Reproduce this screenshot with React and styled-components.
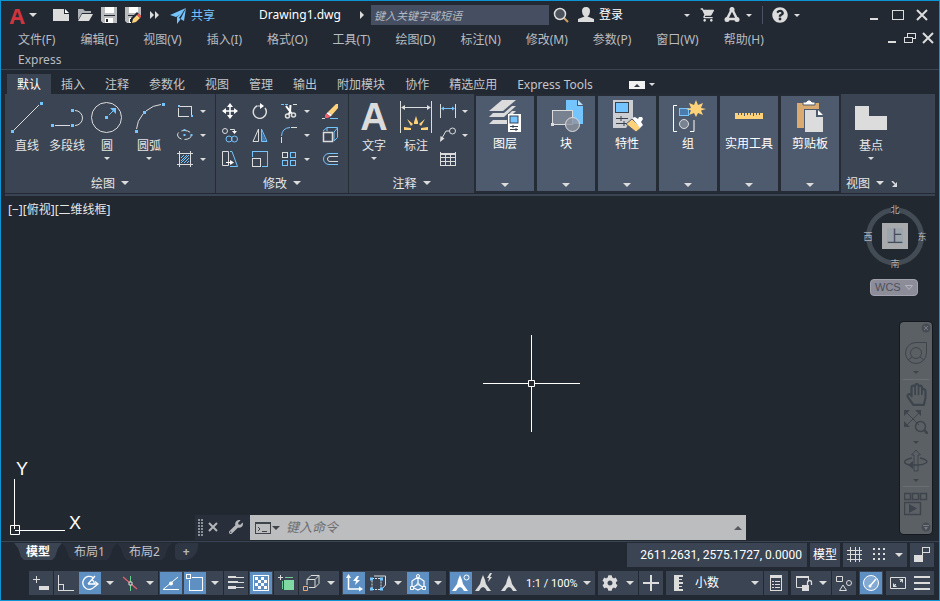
import React from 'react';
import styled, { createGlobalStyle } from 'styled-components';
import { FaCog, FaWrench, FaRegHandPaper, FaQuestionCircle } from 'react-icons/fa';
import { MdShoppingCart } from 'react-icons/md';

const GlobalStyle = createGlobalStyle`
  * {
    box-sizing: border-box;
  }

  body {
    margin: 0;
    background: #222933;
    color: #e6e6e6;
    font: 12px/18px "Noto Sans", "Noto Sans CJK SC", sans-serif;
  }

  button, input, select {
    margin: 0;
    padding: 0;
    border: none;
    background: none;
    color: inherit;
    font: inherit;
  }

  svg {
    display: block;
    flex: none;
  }
`;

const W = '#dcdcdc';
const B = '#74c4ff';
const Y = '#ffd27a';

/* ---------- shared parts ---------- */

const Window = styled.div`
  display: flex;
  flex-direction: column;
  min-height: 100vh;
  border: 1px solid #0d94d4;
  background: #222933;
`;

const Caret = styled.span`
  flex: none;
  width: 0;
  height: 0;
  border: ${p => (p.$big ? 4 : 3)}px solid transparent;
  border-top-color: ${p => p.$color || W};
  border-bottom: none;
`;

const Btn = styled.button`
  display: flex;
  flex: none;
  align-items: center;
  justify-content: center;
  width: ${p => p.$w || 24}px;
  height: ${p => p.$h || 24}px;
`;

const Svg = ({ w = 16, h, crisp, children }) => (
  <svg
    width={w}
    height={h || w}
    viewBox={`0 0 ${w} ${h || w}`}
    fill="none"
    stroke={W}
    shapeRendering={crisp ? 'crispEdges' : 'auto'}
    aria-hidden="true"
  >
    {children}
  </svg>
);

const Dot = ({ x, y, s = 3 }) => (
  <rect x={x - s / 2} y={y - s / 2} width={s} height={s} fill={B} stroke="none" />
);

/* ---------- title bar ---------- */

const TitleBar = styled.header`
  display: flex;
  align-items: center;
  height: 28px;
  padding: 0 5px 0 4px;
  color: #fff;
`;

const Logo = styled.span`
  margin-right: 4px;
  color: #d0343c;
  font: bold 22px/22px "Open Sans", sans-serif;
`;

const Share = styled.button`
  display: flex;
  align-items: center;
  gap: 4px;
  margin-left: 4px;
  padding-top: 1px;
  color: ${B};
`;

const FileName = styled.span`
  flex: 1;
  padding-left: 32px;
  text-align: center;
`;

const SearchInput = styled.input`
  width: 178px;
  height: 20px;
  padding: 0 3px;
  background: #454f61;
  color: #fff;
  font-size: 11px;
  font-style: italic;

  &::placeholder {
    color: #b5bac2;
    opacity: 1;
  }
`;

const Login = styled.button`
  display: flex;
  align-items: center;
  gap: 5px;
  width: 112px;
  margin-left: 5px;

  ${Caret} {
    margin-left: auto;
  }
`;

const Divider = styled.span`
  width: 1px;
  height: 18px;
  margin: 0 8px 0 8px;
  background: #4a5263;
`;

const WindowControls = styled.div`
  display: flex;
  align-items: center;
  margin: 0 ${p => p.$mr || 0}px 0 ${p => p.$ml || 0}px;
`;

const MinIcon = () => (
  <Svg w={14} crisp><path d="M3 11h8" strokeWidth="2" /></Svg>
);
const MaxIcon = () => (
  <Svg w={14} crisp><path d="M1.500 2v9.500M12.500 2v9.500M1 2h12M1 11.500h12" /><path d="M1 2.500h12" /></Svg>
);
const CloseIcon = () => (
  <Svg w={14}><path d="M2 2l10 10M12 2L2 12" strokeWidth="2" /></Svg>
);
const RestoreIcon = () => (
  <Svg w={14} crisp>
    <path d="M1.500 6.500h8v5h-8zM4.500 6V2.500h8v5H10" />
    <path d="M1 6h9M4 2h9" strokeWidth="1" />
  </Svg>
);

const FloppyShape = () => (
  <>
    <path d="M0 0h16v16H2L0 14z" fill="#b9bbbe" stroke="none" />
    <path d="M4 0h9v6H4z" fill="#fff" stroke="none" />
    <path d="M3 8h11v1H3z" fill="#222933" stroke="none" />
    <path d="M4 11h8v5H4z" fill="#fff" stroke="none" />
    <path d="M5 12h2v3H5z" fill="#222933" stroke="none" />
  </>
);

const quickTools = [
  {
    name: '新建',
    icon: (
      <Svg w={16} h={12}>
        <path d="M0 0h11v5h5v7H0z" fill={W} stroke="none" />
        <path d="M12 0l4 4h-4z" fill="#fff" stroke="none" />
      </Svg>
    ),
  },
  {
    name: '打开',
    icon: (
      <Svg w={16} h={14}>
        <path d="M1 12V1h5l2 2h6v2H5z" fill="#aeb1b5" stroke="none" />
        <path d="M5 6h11l-4 7H1z" fill={W} stroke="none" />
      </Svg>
    ),
  },
  { name: '保存', icon: <Svg><FloppyShape /></Svg> },
  {
    name: '另存为',
    icon: (
      <Svg>
        <FloppyShape />
        <path d="M6 16v-5l6-6 5 5v6z" fill="#222933" stroke="none" />
        <path d="M7 16l1-4 4-4 3 3-4 4z" fill={Y} stroke="none" />
        <path d="M12 8l1.500-1.500 3 3L15 11z" fill="#f0574c" stroke="none" />
      </Svg>
    ),
  },
];

function TopBar() {
  return (
    <TitleBar>
      <Btn $w={36} aria-label="应用程序菜单">
        <Logo>A</Logo>
        <Caret $big />
      </Btn>
      <WindowControls $ml={8}>
        {quickTools.map(t => <Btn key={t.name} aria-label={t.name}>{t.icon}</Btn>)}
        <Btn $w={20} aria-label="更多">
          <Svg w={10} h={8}><path d="M0 0l4 4-4 4zM5 0l4 4-4 4z" fill={W} stroke="none" /></Svg>
        </Btn>
      </WindowControls>
      <Share>
        <Svg w={18} h={16}>
          <path d="M1 7L17 0l-5 6-5 3z" fill={B} stroke="none" />
          <path d="M17 0l-2 13-5-3 5-7-7 6v7l3-4" fill={B} stroke="none" />
        </Svg>
        共享
      </Share>
      <FileName>Drawing1.dwg</FileName>
      <Btn $w={18} aria-label="展开搜索">
        <Svg w={4} h={8}><path d="M0 0l4 4-4 4z" fill={W} stroke="none" /></Svg>
      </Btn>
      <SearchInput aria-label="搜索" placeholder="键入关键字或短语" />
      <Btn aria-label="查找">
        <Svg>
          <path d="M11 11l4 4" stroke="#d0a15e" strokeWidth="2" />
          <circle cx="7" cy="7" r="5.500" strokeWidth="1.500" fill="#4b525b" />
        </Svg>
      </Btn>
      <Login>
        <Svg>
          <path d="M8 0c3 0 4 2 4 4 0 3-1.500 5-2.500 5.500L16 12v3H0v-3l6.500-2.500C5.500 9 4 7 4 4c0-2 1-4 4-4z" fill={W} stroke="none" />
        </Svg>
        登录
        <Caret />
      </Login>
      <WindowControls $ml={6}>
        <Btn aria-label="购物车"><MdShoppingCart size={16} color={W} /></Btn>
        <Btn aria-label="Autodesk 应用">
          <Svg>
            <path d="M8 2L3 12h10z" strokeWidth="2.500" stroke={W} />
            <circle cx="8" cy="2.500" r="2.500" fill={W} stroke="none" />
            <circle cx="3" cy="12.500" r="2.500" fill={W} stroke="none" />
            <circle cx="13" cy="12.500" r="2.500" fill={W} stroke="none" />
          </Svg>
        </Btn>
        <Btn $w={10} aria-label="应用选项"><Caret /></Btn>
        <Divider />
        <Btn $w={18} aria-label="帮助"><FaQuestionCircle size={16} color={W} /></Btn>
        <Btn $w={16} aria-label="帮助选项"><Caret /></Btn>
      </WindowControls>
      <WindowControls $ml={57}>
        <Btn aria-label="最小化"><MinIcon /></Btn>
        <Btn aria-label="最大化"><MaxIcon /></Btn>
        <Btn aria-label="关闭"><CloseIcon /></Btn>
      </WindowControls>
    </TitleBar>
  );
}

/* ---------- menu bar ---------- */

const MenuRow = styled.div`
  display: flex;
  align-items: flex-start;
  justify-content: space-between;
  padding-left: 5px;
  border-bottom: 1px solid #3b4453;
`;

const MenuList = styled.nav`
  display: flex;
  flex-wrap: wrap;
  max-width: 820px;
`;

const MenuItem = styled.button`
  height: 20px;
  padding: 1px 13px 0 12px;
  color: #b9bcc1;
  line-height: 20px;
`;

const menus = [
  '文件(F)', '编辑(E)', '视图(V)', '插入(I)', '格式(O)', '工具(T)', '绘图(D)',
  '标注(N)', '修改(M)', '参数(P)', '窗口(W)', '帮助(H)', 'Express',
];

function MenuBar() {
  return (
    <MenuRow>
      <MenuList>
        {menus.map(m => <MenuItem key={m}>{m}</MenuItem>)}
      </MenuList>
      <WindowControls $mr={2}>
        <Btn $w={18} $h={18} aria-label="最小化图形"><MinIcon /></Btn>
        <Btn $w={18} $h={18} aria-label="还原图形"><RestoreIcon /></Btn>
        <Btn $w={18} $h={18} aria-label="关闭图形"><CloseIcon /></Btn>
      </WindowControls>
    </MenuRow>
  );
}

/* ---------- ribbon ---------- */

const TabRow = styled.div`
  display: flex;
  align-items: flex-end;
  height: 24px;
  padding-left: 6px;
`;

const Tab = styled.button`
  height: 20px;
  padding: 1px 10px 0;
  background: ${p => (p.$active ? '#3b4453' : 'none')};
  color: ${p => (p.$active ? '#fff' : '#c3c6ca')};
  line-height: 20px;
`;

const CollapseBtn = styled.button`
  display: flex;
  align-items: center;
  gap: 4px;
  height: 19px;
  margin-left: 26px;
`;

const RibbonBody = styled.div`
  display: flex;
  height: 99px;
  margin: 0 4px;
  background: #3b4453;
`;

const RibbonEdge = styled.div`
  height: 2px;
  margin: 1px 4px 0;
  background: #3b4453;
`;

const Panel = styled.section`
  display: flex;
  flex-direction: column;
  flex: ${p => (p.$grow ? '1' : 'none')};
  border-right: ${p => (p.$grow ? 'none' : '1px solid #262c36')};
`;

const PanelTools = styled.div`
  display: flex;
  flex: 1;
  padding: 5px ${p => p.$pr || 0}px 0 ${p => p.$pl || 0}px;
`;

const PanelTitle = styled.button`
  display: flex;
  align-items: center;
  justify-content: ${p => (p.$left ? 'flex-start' : 'center')};
  gap: 6px;
  height: 20px;
  padding: 2px 5px 0;

  ${Caret} {
    margin-bottom: 2px;
  }
`;

const BigTool = styled.button`
  display: flex;
  flex-direction: column;
  align-items: center;
  width: ${p => p.$w || 40}px;
  height: 64px;
  padding-top: 2px;
  white-space: nowrap;

  svg {
    margin-bottom: 4px;
  }

  ${Caret} {
    margin-top: 2px;
  }
`;

const LetterIcon = styled.span`
  height: 36px;
  color: ${W};
  font: bold 38px/32px "Liberation Sans", sans-serif;
`;

const SmallGrid = styled.div`
  display: grid;
  grid-template-columns: ${p => p.$cols};
  grid-auto-rows: 24px;
`;

const Cell = styled.button`
  display: flex;
  align-items: center;
  justify-content: center;
`;

const Tile = styled.button`
  display: flex;
  flex: none;
  flex-direction: column;
  align-items: center;
  width: 61px;
  padding: 4px 0;
  border: solid #262c36;
  border-width: 2px 2px 2px 1px;
  background: #4e5b6e;
  color: #fff;
  white-space: nowrap;

  svg {
    margin-bottom: 3px;
  }

  ${Caret} {
    margin-top: auto;
  }
`;

const tabs = [
  '默认', '插入', '注释', '参数化', '视图', '管理', '输出', '附加模块', '协作', '精选应用', 'Express Tools',
];

const drawTools = [
  {
    name: '直线',
    icon: <Svg w={32}><path d="M3 29L28 4" /><Dot x={1.5} y={30.5} /><Dot x={30.5} y={2.5} /></Svg>,
  },
  {
    name: '多段线',
    icon: (
      <Svg w={32}>
        <path d="M4 24.500h15M24 9.500a7.500 7.500 0 0 1 0 15" />
        <Dot x={1.5} y={24.5} /><Dot x={21.5} y={24.5} /><Dot x={21.5} y={9.5} />
      </Svg>
    ),
  },
  {
    name: '圆',
    menu: true,
    icon: (
      <Svg w={32}>
        <circle cx="15.500" cy="16.500" r="15" />
        <Dot x={15.5} y={16.5} />
        <path d="M18 14l4-4" stroke={B} />
        <path d="M25 7v6l-6-6z" fill={B} stroke="none" />
      </Svg>
    ),
  },
  {
    name: '圆弧',
    menu: true,
    w: 44,
    icon: (
      <Svg w={32}>
        <path d="M3.500 28Q4 20 10 13M13 10Q20 4 28 3.500" />
        <Dot x={3.5} y={30.5} /><Dot x={11.5} y={11.5} /><Dot x={30.5} y={3.5} />
      </Svg>
    ),
  },
];

const drawSmall = [
  <Svg crisp><path d="M3 3.500h11.500V12M12 13.500H1.500V5" /><Dot x={1.5} y={3} s={2} /><Dot x={15} y={13} s={2} /></Svg>,
  <Svg><ellipse cx="7.500" cy="8" rx="7" ry="4.500" strokeDasharray="9 3" /><Dot x={7.5} y={8} s={2} /><Dot x={7.5} y={3} s={2} /><Dot x={14.5} y={8} s={2} /></Svg>,
  <Svg>
    <path d="M2.500 0v16M13.500 0v16M0 2.500h16M0 13.500h16" />
    <path d="M4 7l3-3M4 10l6-6M4 12l8-8M7 12l5-5M10 12l2-2" stroke={B} />
  </Svg>,
];

const modifyRows = [
  [
    <Svg><path d="M8 2v12M2 8h12" strokeWidth="1.500" stroke="#fff" /><path d="M8 0l3 4H5zM8 16l3-4H5zM0 8l4-3v6zM16 8l-4-3v6z" fill="#fff" stroke="none" /></Svg>,
    <Svg><path d="M5.500 2.800A6.500 6.500 0 1 0 13 5" strokeWidth="1.500" /><path d="M9 3H6" /><path d="M8 0l4 3-4 3z" fill="#fff" stroke="none" /></Svg>,
    <Svg>
      <path d="M0 1.500h7" stroke={B} strokeDasharray="3 1" /><path d="M12 1.500h4" />
      <path d="M5 3l6 8M9.500 2L9 9l-2 3" strokeWidth="2" stroke="#fff" />
      <circle cx="6.500" cy="13" r="2" strokeWidth="1.500" /><circle cx="12.500" cy="12" r="2" strokeWidth="1.500" />
    </Svg>,
    <Svg>
      <path d="M0 15.500h3" /><path d="M8 15.500h8" stroke={B} />
      <path d="M14 1h2v4l-6 7-4-3z" fill={Y} stroke="none" />
      <path d="M6 9l4 3-1.500 1.500-4-3z" fill="#fff" stroke="none" />
      <path d="M4.500 10.500l4 3L6 15H3v-3z" fill="#f0606c" stroke="none" />
    </Svg>,
  ],
  [
    <Svg>
      <circle cx="3" cy="4" r="2.500" /><path d="M8 2.500h4.500V5" /><path d="M10 4h5l-2.500 3z" fill="#fff" stroke="none" />
      <circle cx="7" cy="12" r="3" stroke={B} /><circle cx="12.500" cy="12" r="3" stroke={B} />
    </Svg>,
    <Svg><path d="M6.500 2v12.500H1z" /><path d="M9.500 2v12.500H15z" stroke={B} /><path d="M10 5v9h4z" fill="#3f7bb0" stroke="none" /></Svg>,
    <Svg><path d="M.500 9Q1 1 9 .500" stroke={B} /><path d="M10 .500h6M.500 10v6" /></Svg>,
    <Svg><rect x="1.500" y="5.500" width="9" height="9" strokeWidth="1.500" /><path d="M1 4l4-3.500h10.500v10L12 14M5 1v3M12 5l3.500-4M12 5v9" stroke={B} /></Svg>,
  ],
  [
    <Svg><path d="M.500.500h6v14h-6z" /><path d="M8 .500h2l5.500 15H8" stroke={B} /><path d="M4 11.500h5" stroke="#fff" /><path d="M8 9l4 2.500L8 14z" fill="#fff" stroke="none" /></Svg>,
    <Svg crisp><path d="M.500 6V.500h15v15H10" stroke={B} /><rect x=".500" y="7.500" width="8" height="8" /></Svg>,
    <Svg crisp><rect x="1.500" y="1.500" width="5" height="5" /><g stroke={B}><rect x="9.500" y="1.500" width="5" height="5" /><rect x="1.500" y="9.500" width="5" height="5" /><rect x="9.500" y="9.500" width="5" height="5" /></g></Svg>,
    <Svg><path d="M16 2.500H7a5.500 5.500 0 0 0 0 11h9" stroke={B} /><path d="M16 5.500H8a2.500 2.500 0 0 0 0 5h8" /></Svg>,
  ],
];

const annoSmall = [
  <Svg><path d="M.500 1v14M15.500 1v14" /><path d="M2 5.500h12" stroke={B} /><path d="M1 5.500L4 3.500v4zM15 5.500l-3-2v4z" fill={B} stroke="none" /></Svg>,
  <Svg><circle cx="12.500" cy="4" r="3" /><path d="M9.500 4H6l-4 7" /><path d="M0 15l.500-6 4 2.500z" fill={W} stroke="none" /></Svg>,
  <Svg crisp><path d="M.500 1v13.500h15V1M0 2.500h16M0 3.500h16M0 6.500h16M0 10.500h16M5.500 3v11M10.500 3v11" /></Svg>,
];

const tiles = [
  {
    name: '图层',
    icon: (
      <Svg w={34} h={32}>
        <g fill={W} stroke="none">
          <path d="M14 0h14L15 11H1z" />
          <path d="M5 13h11l8-7h4L16 17H1z" />
          <path d="M5 20h14v4H1z" />
          <path d="M24 11h4l-4 4h-4z" />
        </g>
        <rect x="20" y="14" width="13" height="18" fill="#fff" stroke="none" />
        <rect x="22" y="16" width="8" height="7" fill={B} stroke="#39424f" />
        <path d="M22 26.500h8M22 29.500h8M25 25v3M28 28v3" stroke="#39424f" />
      </Svg>
    ),
  },
  {
    name: '块',
    icon: (
      <Svg w={34} h={32}>
        <path d="M17 0h11v6h6v18H17z" fill={B} stroke="none" />
        <path d="M29 0l5 5h-5z" fill="#b7e0ff" stroke="none" />
        <rect x="3.500" y="10.500" width="20" height="14" fill="#78818f" />
        <rect x="2" y="23" width="3" height="3" fill={W} stroke="none" />
        <circle cx="23.500" cy="24.500" r="7" fill="#8d94a0" fillOpacity=".8" />
      </Svg>
    ),
  },
  {
    name: '特性',
    icon: (
      <Svg w={32}>
        <path d="M2 0h20v18l-7 10H2z" fill="#ccced1" stroke="none" />
        <rect x="4.500" y="2.500" width="13" height="10" fill={B} stroke="#39424f" />
        <path d="M5 18.500h12M5 23.500h10M10 16v5M13 21v5" stroke="#39424f" />
        <path d="M15 24l6-5 9 9-5 4z" fill={Y} stroke="#4e5b6e" />
        <path d="M21 18l3-1 3 2 1-2h3l1 2-2 3 2 3-3 3z" fill="#fff" stroke="none" />
      </Svg>
    ),
  },
  {
    name: '组',
    icon: (
      <Svg w={36} h={32}>
        <path d="M7 5.500H3.500v26H7M20 31.500h4V20" stroke="#fff" />
        <rect x="9.500" y="8.500" width="9" height="7" fill="#4a7dad" stroke={B} />
        <circle cx="14" cy="24" r="4.500" fill="#7a8391" />
        <path d="M26 0l2 5 5-2-2 5 5 1-5 1.500 2 4.500-5-2-2 4-2-4-5 2 2-4.500L16 9l5-1-2-5 5 2z" fill={Y} stroke="none" />
      </Svg>
    ),
  },
  {
    name: '实用工具',
    icon: (
      <Svg w={32} crisp>
        <path d="M2 13h28v6H2z" fill={Y} stroke="none" />
        <path d="M5.500 13v2M8.500 13v2M11.500 13v3M14.500 13v2M17.500 13v2M20.500 13v3M23.500 13v2M26.500 13v2" stroke="#4e5b6e" />
      </Svg>
    ),
  },
  {
    name: '剪贴板',
    icon: (
      <Svg w={32}>
        <path d="M3 3h22v25H3z" fill="#d9ab70" stroke="none" />
        <path d="M9 5V2h3l2-2h2l2 2h3v3z" fill="#fff" stroke="#4e5b6e" />
        <path d="M10 9h20v24H10z" fill="#4e5b6e" stroke="none" />
        <path d="M11 10h11v7h7v15H11z" fill={W} stroke="none" />
        <path d="M24 10l5 5h-5z" fill="#fff" stroke="none" />
      </Svg>
    ),
  },
];

const SplitRow = ({ icon, label }) => (
  <>
    <Cell aria-label={label}>{icon}</Cell>
    <Cell aria-label={`${label}选项`}><Caret /></Cell>
  </>
);

function Ribbon() {
  return (
    <>
      <TabRow>
        {tabs.map((t, i) => <Tab key={t} $active={i === 0}>{t}</Tab>)}
        <CollapseBtn aria-label="最小化功能区">
          <Svg w={16} h={8}>
            <path d="M0 0h16v8H0z" fill="#f2f2f2" stroke="none" />
            <path d="M8 3l3 3H5z" fill="#333b47" stroke="none" />
          </Svg>
          <Caret />
        </CollapseBtn>
      </TabRow>

      <RibbonBody>
        <Panel>
          <PanelTools $pl={2} $pr={9}>
            {drawTools.map(t => (
              <BigTool key={t.name} $w={t.w}>
                {t.icon}
                {t.name}
                {t.menu && <Caret />}
              </BigTool>
            ))}
            <SmallGrid $cols="28px 7px">
              <SplitRow icon={drawSmall[0]} label="矩形" />
              <SplitRow icon={drawSmall[1]} label="椭圆" />
              <SplitRow icon={drawSmall[2]} label="图案填充" />
            </SmallGrid>
          </PanelTools>
          <PanelTitle>绘图<Caret $big /></PanelTitle>
        </Panel>

        <Panel>
          <PanelTools>
            <SmallGrid $cols="28px 32px 26px 10px 36px">
              <Cell aria-label="移动">{modifyRows[0][0]}</Cell>
              <Cell aria-label="旋转">{modifyRows[0][1]}</Cell>
              <SplitRow icon={modifyRows[0][2]} label="修剪" />
              <Cell aria-label="删除">{modifyRows[0][3]}</Cell>
              <Cell aria-label="复制">{modifyRows[1][0]}</Cell>
              <Cell aria-label="镜像">{modifyRows[1][1]}</Cell>
              <SplitRow icon={modifyRows[1][2]} label="圆角" />
              <Cell aria-label="分解">{modifyRows[1][3]}</Cell>
              <Cell aria-label="拉伸">{modifyRows[2][0]}</Cell>
              <Cell aria-label="缩放">{modifyRows[2][1]}</Cell>
              <SplitRow icon={modifyRows[2][2]} label="阵列" />
              <Cell aria-label="偏移">{modifyRows[2][3]}</Cell>
            </SmallGrid>
          </PanelTools>
          <PanelTitle>修改<Caret $big /></PanelTitle>
        </Panel>

        <Panel>
          <PanelTools $pl={3} $pr={4}>
            <BigTool $w={44}>
              <LetterIcon>A</LetterIcon>
              文字
              <Caret />
            </BigTool>
            <BigTool>
              <Svg w={32}>
                <path d="M.500 0v32M31.500 0v32M3 6.500h26" />
                <path d="M1 6.500L5 4v5zM31 6.500L27 4v5z" fill={W} stroke="none" />
                <path d="M16 15l2 6v2h-4v-2zM7 18l6 5-2 2zM25 18l-6 5 2 2zM4 26l7 1v2H4zM28 26l-7 1v2h7z" fill={Y} stroke="none" />
              </Svg>
              标注
            </BigTool>
            <SmallGrid $cols="24px 10px">
              <SplitRow icon={annoSmall[0]} label="线性" />
              <SplitRow icon={annoSmall[1]} label="引线" />
              <Cell aria-label="表格">{annoSmall[2]}</Cell>
            </SmallGrid>
          </PanelTools>
          <PanelTitle>注释<Caret $big /></PanelTitle>
        </Panel>

        {tiles.map(t => (
          <Tile key={t.name}>
            {t.icon}
            {t.name}
            <Caret $big />
          </Tile>
        ))}

        <Panel $grow>
          <PanelTools $pl={10}>
            <BigTool>
              <Svg w={32}><path d="M0 5h14v10h18v14H0z" fill={W} stroke="none" /></Svg>
              基点
              <Caret />
            </BigTool>
          </PanelTools>
          <PanelTitle $left>
            视图
            <Caret $big />
            <Svg w={8} h={6}>
              <path d="M2 0l3 3" strokeWidth="1.500" /><path d="M7 1v5H2z" fill={W} stroke="none" />
            </Svg>
          </PanelTitle>
        </Panel>
      </RibbonBody>
      <RibbonEdge />
    </>
  );
}

/* ---------- drawing area ---------- */

const Canvas = styled.main`
  position: relative;
  flex: 1;
  min-height: 345px;
  padding: 5px 7px;
  background: #212830;
`;

const Float = styled.div`
  position: absolute;
  top: ${p => p.$top};
  right: ${p => p.$right};
  bottom: ${p => p.$bottom};
  left: ${p => p.$left};
`;

const Wcs = styled.button`
  display: flex;
  align-items: center;
  justify-content: space-between;
  width: 48px;
  height: 17px;
  padding: 0 4px;
  border: 1px solid #a3a3b0;
  border-radius: 4px;
  background: #8d8d9a;
  color: #4c505a;
  font: 11px/15px "Liberation Sans", sans-serif;
`;

const NavBar = styled.div`
  display: flex;
  flex-direction: column;
  align-items: center;
  width: 32px;
  border-radius: 4px;
  background: #5b6065;
  box-shadow: 0 0 0 1px #15191f;

  hr {
    width: 26px;
    margin: 0;
    border: none;
    border-top: 1px solid #6a6f74;
  }
`;

const NavCorner = styled.button`
  display: flex;
  align-self: flex-end;
  width: 12px;
  height: 12px;
  margin: ${p => (p.$low ? '1px 0' : '0 0 6px')};
`;

const CommandLine = styled.div`
  display: flex;
  height: 25px;
`;

const CommandHandle = styled.div`
  display: flex;
  align-items: center;
  width: 55px;
  padding: 0 0 2px 3px;
  background: #282e3a;
`;

const CommandBox = styled.div`
  display: flex;
  flex: 1;
  align-items: center;
  padding: 0 4px;
  background: #bcbdbf;
`;

const CommandInput = styled.input`
  flex: 1;
  min-width: 0;
  padding: 0 6px 2px;
  color: #333;
  font-size: 13px;
  font-style: italic;

  &::placeholder {
    color: #6c6d70;
    opacity: 1;
  }
`;

const NK = '#3d444c';

function ViewCube() {
  return (
    <svg width="68" height="70" viewBox="0 0 68 70" fontFamily="'Noto Sans CJK SC', sans-serif" textAnchor="middle" role="img" aria-label="ViewCube">
      <circle cx="34" cy="33.500" r="26.500" fill="none" stroke="#434b55" strokeWidth="5" />
      <rect x="21" y="20" width="26" height="26" fill="#a9aaab" />
      <rect x="26" y="25" width="16" height="16" fill="#9ba5ab" />
      <g fill="#212830">
        <rect x="30" y="1" width="8" height="9" />
        <rect x="30" y="57" width="8" height="9" />
      </g>
      <text x="34" y="39" fontSize="16" fill="#454d57">上</text>
      <g fontSize="9" fill="#b0b3b6">
        <text x="34" y="10">北</text>
        <text x="34" y="64">南</text>
        <text x="7" y="37">西</text>
        <text x="61" y="37">东</text>
      </g>
    </svg>
  );
}

function Navigation() {
  return (
    <NavBar>
      <NavCorner aria-label="关闭导航栏">
        <Svg w={12}><circle cx="6" cy="6" r="4.500" fill="#474d54" stroke="none" /><path d="M4 4l4 4M8 4L4 8" stroke="#777c82" /></Svg>
      </NavCorner>
      <Btn $h={26} aria-label="全导航控制盘">
        <Svg w={24}>
          <path d="M12 1.500h10.500V12A10.500 10.500 0 1 1 12 1.500z" stroke={NK} />
          <circle cx="12" cy="12" r="5.500" stroke={NK} /><path d="M4 19l4-3M20 19l-4-3" stroke={NK} />
        </Svg>
      </Btn>
      <Btn $h={13} aria-label="控制盘选项"><Caret $color={NK} /></Btn>
      <hr />
      <Btn $h={28} aria-label="平移"><FaRegHandPaper size={23} color={NK} /></Btn>
      <Btn $h={28} aria-label="范围缩放">
        <Svg w={24}>
          <g stroke={NK}><path d="M2 2l13 13M16 2L2 16" /><circle cx="16.500" cy="16.500" r="5" strokeWidth="1.500" /><path d="M20 20l4 4" strokeWidth="2.500" /></g>
          <path d="M0 0h6L0 6zM17 0v6l-6-6zM0 17v-6l6 6z" fill={NK} stroke="none" />
        </Svg>
      </Btn>
      <Btn $h={12} aria-label="缩放选项"><Caret $color={NK} /></Btn>
      <Btn $h={26} aria-label="动态观察">
        <Svg w={24}>
          <g stroke={NK}><path d="M10 22V6H7.500L12 1l4.500 5H14v16z" /><path d="M8 9C-2 11-1 15 6 16h8c11-1 12-5 2-7" strokeWidth="1.500" /></g>
          <path d="M4 16l5-4v8z" fill={NK} stroke="none" />
        </Svg>
      </Btn>
      <Btn $h={12} aria-label="动态观察选项"><Caret $color={NK} /></Btn>
      <hr />
      <Btn $h={33} aria-label="ShowMotion">
        <Svg w={24}>
          <g stroke={NK}><path d="M.500 1.500h6v6h-6zM8.500 1.500h6v6h-6zM16.500 1.500h6v6h-6zM.500 10.500h16v12h-16z" strokeWidth="1.500" /></g>
          <path d="M5 12l8 4.500L5 21z" fill={NK} stroke="none" />
        </Svg>
      </Btn>
      <NavCorner $low aria-label="自定义导航栏">
        <Svg w={12}><circle cx="6" cy="6" r="4.500" fill="#474d54" stroke="none" /><path d="M3 4.500h6" stroke="#777c82" /><path d="M4 6h4L6 9z" fill="#777c82" stroke="none" /></Svg>
      </NavCorner>
    </NavBar>
  );
}

function DrawingArea() {
  return (
    <Canvas>
      [−][俯视][二维线框]
      <Float $top="7px" $right="10px"><ViewCube /></Float>
      <Float $top="83px" $right="21px">
        <Wcs>WCS<Svg w={8} h={5}><path d="M.500.500h7L4 4.500z" stroke="#b4b4c0" /></Svg></Wcs>
      </Float>
      <Float $top="126px" $right="7px"><Navigation /></Float>

      {/* cursor */}
      <Float $top="139px" $left="482px">
        <svg width="97" height="97" viewBox="0 0 97 97" fill="none" stroke="#fff" aria-hidden="true">
          <path d="M48.500 0v45M48.500 52v45M0 48.500h45M52 48.500h45M45.500 45.500h6v6h-6z" />
        </svg>
      </Float>

      {/* UCS icon */}
      <Float $bottom="1px" $left="6px">
        <svg width="84" height="86" viewBox="0 -6 84 86" fill="none" stroke="#fff" role="img" aria-label="UCS">
          <path d="M7.500 19v50M8 70.500h50M3.500 65.500h9v9h-9z" />
          <g fill="#fff" stroke="none" fontFamily="'Liberation Sans', sans-serif" fontSize="18" textAnchor="middle">
            <text x="15" y="15">Y</text>
            <text x="68" y="69">X</text>
          </g>
        </svg>
      </Float>

      <Float $bottom="1px" $left="194px" $right="193px">
        <CommandLine>
          <CommandHandle>
            <Svg w={6} h={18} crisp><path d="M1 1v17M4 1v17" strokeWidth="2" strokeDasharray="2 1" stroke="#8c9097" /></Svg>
            <Btn $w={18} aria-label="关闭命令行"><Svg w={12}><path d="M2 2l8 8M10 2l-8 8" strokeWidth="2" stroke="#b4b6b9" /></Svg></Btn>
            <Btn $w={28} aria-label="自定义"><FaWrench size={14} color="#b4b6b9" /></Btn>
          </CommandHandle>
          <CommandBox>
            <Btn $w={26} aria-label="最近使用的命令">
              <Svg w={17} h={12} crisp>
                <path d="M.500.500h15v11H.500zM0 1.500h16" stroke="#3f444b" />
                <path d="M3 5l2 2-2 2M7 9.500h5" stroke="#3f444b" />
              </Svg>
              <Caret $big $color="#3f444b" />
            </Btn>
            <CommandInput aria-label="命令" placeholder="键入命令" />
            <Svg w={8} h={4}><path d="M4 0l4 4H0z" fill="#55585c" stroke="none" /></Svg>
          </CommandBox>
        </CommandLine>
      </Float>
    </Canvas>
  );
}

/* ---------- layout tabs and status bar ---------- */

const LayoutRow = styled.div`
  display: flex;
  align-items: flex-start;
  justify-content: space-between;
  padding: 1px 5px 0 13px;
  border-top: 1px solid #3b4453;
`;

const Group = styled.div`
  display: flex;
  gap: ${p => p.$gap || 0}px;
`;

const LayoutTab = styled.button`
  height: 17px;
  padding: 0 12px;
  background: ${p => (p.$active ? '#3b4453' : '#2a313d')};
  color: ${p => (p.$active ? '#fff' : '#c0c3c8')};
  font-weight: ${p => (p.$active ? 700 : 400)};
  line-height: 16px;
  clip-path: polygon(0 0, 100% 0, calc(100% - 4px) 5px, calc(100% - 7px) 14px, calc(100% - 10px) 100%, 10px 100%, 7px 14px, 4px 5px);
`;

const AddTab = styled.button`
  width: 23px;
  height: 17px;
  margin-left: 3px;
  border-radius: 4px 0 14px 4px;
  background: #2f3643;
  color: #b4b8be;
  font-weight: 700;
  line-height: 15px;
`;

const StatusRow = styled.footer`
  display: flex;
  justify-content: flex-end;
  gap: 3px;
  padding: 4px 5px 5px;
`;

const Box = styled.div`
  display: flex;
  align-items: center;
  justify-content: ${p => (p.$end ? 'flex-end' : 'center')};
  width: ${p => (p.$w ? `${p.$w}px` : 'auto')};
  height: 24px;
  padding-right: ${p => (p.$end ? 5 : 0)}px;
  background: #3b4453;
  color: #fff;
`;

const Coords = styled.span`
  font-family: Roboto, sans-serif;
`;

const Tool = styled(Btn)`
  border: 1px solid #3b4453;
  background: ${p => (p.$on ? '#5f90c4' : '#3b4453')};
`;

const SelectWrap = styled.label`
  display: grid;
  align-items: center;
  width: ${p => p.$w}px;

  > * {
    grid-area: 1 / 1;
  }

  select {
    width: 100%;
    height: 24px;
    padding-left: ${p => p.$pl}px;
    appearance: none;
    font: ${p => (p.$latin ? '11px Roboto, sans-serif' : 'inherit')};
  }

  ${Caret} {
    justify-self: end;
    margin-right: 4px;
    pointer-events: none;
  }
`;

const Arrow = ({ label }) => <Btn $w={16} aria-label={label}><Caret $big /></Btn>;

const person = 'M10 1l2 5 1 4 5 7h-4l-2-3-2-1-2 1-2 3H2l5-7 1-4z';

const st = {
  dyn: <Svg w={20}><path d="M2 6.500h7M5.500 3v7" /><path d="M8 13h10v4H8z" fill={W} stroke="none" /></Svg>,
  ortho: <Svg w={20} crisp><path d="M2.500 2v15.500H18M2 11.500h5.500V17" /></Svg>,
  polar: <Svg w={20}><g stroke="#fff" strokeWidth="1.300"><path d="M13 4.500A6.500 6.500 0 1 0 15 13M8 11h10M8 11l7-8M12 6.500q2.500 2 2.500 4.500" /><path d="M15 8.500l3 2.500-3 2.500" /></g></Svg>,
  iso: <Svg w={20}><path d="M3 4l14 12" stroke="#e0626e" strokeWidth="1.300" /><path d="M10.500 3v15" stroke="#66cf8c" /><path d="M9 9h3v3H9z" fill="#3b4453" /></Svg>,
  track: <Svg w={20}><path d="M17 4L2 16.500h16" stroke="#fff" /><circle cx="10" cy="10.500" r="2" fill="#fff" stroke="none" /></Svg>,
  osnap: <Svg w={20} crisp><path d="M7 4.500h10.500v13H4.500V7" stroke="#fff" /><path d="M1.500 1.500h4v4h-4z" stroke="#fff" /></Svg>,
  lwt: <Svg w={20} crisp><path d="M2 3.500h8M10 4.500h8M2 9.500h16M10 14.500h8" /><path d="M2 3h8v2H2zM2 8h10v2H2zM2 13h8v3H2z" fill={W} stroke="none" /></Svg>,
  trans: (
    <Svg w={20} crisp>
      <path d="M2.500 2.500h15v15h-15z" stroke="#fff" />
      <path d="M5.500 4v12M11.500 4v12" stroke="#fff" strokeWidth="3" strokeDasharray="3 3" />
      <path d="M8.500 7v9M14.500 7v9" stroke="#fff" strokeWidth="3" strokeDasharray="3 3" />
    </Svg>
  ),
  cycle: <Svg w={20} crisp><path d="M2 4.500h5M4.500 2v5" /><path d="M9 4.500h8M6.500 8v8" stroke="#6fce96" /><path d="M8 7h10v10H8z" fill="#7fd9a2" stroke="none" /></Svg>,
  osnap3: <Svg w={20}><path d="M6 12V6.500h8v8H8M6 6.500l4-4h8v8l-4 4M14 6.500l4-4" /><path d="M2.500 13.500h4v4h-4z" stroke="#f0a878" /></Svg>,
  ucs: <Svg w={20}><path d="M4.500 4v12H16" stroke="#fff" strokeWidth="1.500" /><path d="M4.500 1L7 5H2zM19 16l-4-2.500v5z" fill="#fff" stroke="none" /><path d="M13 3l-4 5h3l-1 4 5-5h-3l2-4z" fill="#fff" stroke="none" /></Svg>,
  filter: <Svg w={20}><path d="M4 5.500h9v11H4z" strokeDasharray="2 1" /><path d="M6 3h11.500v9L14 16" /><Dot x={3.5} y={6} /><Dot x={13.5} y={6} /><Dot x={3.5} y={16} /><Dot x={13.5} y={16} /></Svg>,
  gizmo: <Svg w={20}><g stroke="#fff" strokeWidth="1.200"><path d="M10 4l6 4v6l-6 3-6-3V8zM10 4v7M10 11l-6 4M10 11l6 4" /></g><g fill="#5f90c4" stroke="#fff"><circle cx="10" cy="3" r="1.500" /><path d="M2.500 13.500h3v3h-3zM14.500 13.500h3v3h-3z" /><circle cx="10" cy="11" r="1" /></g></Svg>,
  anno: <Svg w={20}><path d={person} fill="#fff" stroke="none" transform="translate(-1 1)" /><circle cx="15.500" cy="4.500" r="2.500" stroke="#fff" /></Svg>,
  auto: <Svg w={20}><path d={person} fill={W} stroke="none" transform="translate(-2 1)" /><path d="M15 0l-3 5h2l-1 4 4-5h-2l2-4z" fill={W} stroke="none" /></Svg>,
  scale: <Svg w={20}><path d={person} fill={W} stroke="none" transform="translate(0 1)" /></Svg>,
  plus: <Svg w={20} crisp><path d="M2 10h16M10 2v16" strokeWidth="2" /></Svg>,
  ruler: <Svg w={20} crisp><path d="M6 2h9v2h-4v2h3v1h-3v2h4v2h-4v2h3v1h-3v2h4v2H6z" fill={W} stroke="none" /></Svg>,
  props: <Svg w={20} crisp><path d="M4.500 2.500h11v15h-11z" /><path d="M4 3h12v2H4z" fill={W} stroke="none" /><path d="M6 8h2M9 8.500h5M6 11h2M9 11.500h5M6 14h2M9 14.500h5" /></Svg>,
  lock: <Svg w={20}><path d="M9 14.500H3.500v-11h12V9" /><path d="M3 3h13v2H3z" fill={W} stroke="none" /><path d="M9 12h7v6H9z" fill={W} stroke="none" /><path d="M14.500 12V9.500a2 2 0 0 1 4 0V12" strokeWidth="1.300" /></Svg>,
  isolate: <Svg w={20}><path d="M2.500 3.500h6v5h-6zM9 12l3.500 5.500h-7z" /><circle cx="15" cy="10" r="2.500" /></Svg>,
  perf: <Svg w={20}><circle cx="10" cy="10" r="7.500" stroke="#fff" fill="#82aad3" /><path d="M9 13l6-7" stroke="#fff" strokeWidth="1.500" /><circle cx="9" cy="13" r="1.500" fill="#fff" stroke="none" /></Svg>,
  full: <Svg w={20}><path d="M2.500 4.500h15v11h-15z" /><path d="M11 6h4v4zM5 10l4 4H5z" fill={W} stroke="none" /><path d="M6 13l2-2M12 9l2-2" /></Svg>,
  menu: <Svg w={20} crisp><path d="M2 4h16M2 10h16M2 16h16" strokeWidth="2" /></Svg>,
  grid: <Svg w={20} crisp><path d="M5.500 2v15M10.500 2v15M14.500 2v15M2 5.500h15M2 9.500h15M2 14.500h15" /></Svg>,
  snap: <Svg w={20} crisp><path d="M4 4h12M4 9h12M4 14h12" strokeWidth="2" strokeDasharray="2 3" /></Svg>,
  layout: <Svg w={20} crisp><path d="M10.500 10V2.500h7v5H11" /><path d="M2 10h9v7H2z" fill={W} stroke="none" /></Svg>,
};

function StatusBar() {
  return (
    <>
      <LayoutRow>
        <Group>
          <LayoutTab $active>模型</LayoutTab>
          <LayoutTab>布局1</LayoutTab>
          <LayoutTab>布局2</LayoutTab>
          <AddTab aria-label="新建布局">+</AddTab>
        </Group>
        <Group $gap={3}>
          <Box $w={180} $end><Coords>2611.2631, 2575.1727, 0.0000</Coords></Box>
          <Box $w={30} as="button">模型</Box>
          <Box>
            <Tool aria-label="栅格">{st.grid}</Tool>
            <Tool aria-label="捕捉">{st.snap}</Tool>
            <Arrow label="捕捉选项" />
          </Box>
          <Tool aria-label="图纸空间">{st.layout}</Tool>
        </Group>
      </LayoutRow>

      <StatusRow>
        <Group $gap={1}>
          <Tool aria-label="动态输入">{st.dyn}</Tool>
          <Box>
            <Tool aria-label="正交">{st.ortho}</Tool>
            <Tool $on aria-label="极轴追踪">{st.polar}</Tool>
            <Arrow label="极轴选项" />
            <Tool aria-label="等轴测草图">{st.iso}</Tool>
            <Arrow label="等轴测选项" />
          </Box>
          <Box>
            <Tool $on aria-label="对象捕捉追踪">{st.track}</Tool>
            <Tool $on aria-label="对象捕捉">{st.osnap}</Tool>
            <Arrow label="对象捕捉选项" />
          </Box>
          <Tool aria-label="线宽">{st.lwt}</Tool>
          <Tool $on aria-label="透明度">{st.trans}</Tool>
          <Tool aria-label="选择循环">{st.cycle}</Tool>
          <Box>
            <Tool aria-label="三维对象捕捉">{st.osnap3}</Tool>
            <Arrow label="三维对象捕捉选项" />
          </Box>
        </Group>
        <Box>
          <Tool $on aria-label="动态 UCS">{st.ucs}</Tool>
          <Tool aria-label="选择过滤">{st.filter}</Tool>
          <Arrow label="过滤选项" />
          <Tool $on aria-label="小控件">{st.gizmo}</Tool>
          <Arrow label="小控件选项" />
        </Box>
        <Box>
          <Tool $on aria-label="注释可见性">{st.anno}</Tool>
          <Tool aria-label="自动缩放">{st.auto}</Tool>
          <Tool aria-label="注释比例">{st.scale}</Tool>
          <SelectWrap $w={74} $pl={5} $latin>
            <select aria-label="当前视图的注释比例"><option>1:1 / 100%</option></select>
            <Caret $big />
          </SelectWrap>
        </Box>
        <Group $gap={1}>
          <Box>
            <Tool aria-label="切换工作空间"><FaCog size={16} color={W} /></Tool>
            <Arrow label="工作空间选项" />
          </Box>
          <Tool aria-label="注释监视器">{st.plus}</Tool>
        </Group>
        <Group $gap={1}>
          <Box>
            <Tool aria-label="单位">{st.ruler}</Tool>
            <SelectWrap $w={73} $pl={5}>
              <select aria-label="图形单位"><option>小数</option></select>
              <Caret $big />
            </SelectWrap>
          </Box>
          <Tool aria-label="快捷特性">{st.props}</Tool>
        </Group>
        <Group $gap={1}>
          <Box>
            <Tool aria-label="锁定用户界面">{st.lock}</Tool>
            <Arrow label="锁定选项" />
          </Box>
          <Tool aria-label="隔离对象">{st.isolate}</Tool>
        </Group>
        <Tool $on aria-label="图形性能">{st.perf}</Tool>
        <Box>
          <Tool aria-label="全屏显示">{st.full}</Tool>
          <Tool aria-label="自定义">{st.menu}</Tool>
        </Box>
      </StatusRow>
    </>
  );
}

function App() {
  return (
    <Window>
      <GlobalStyle />
      <TopBar />
      <MenuBar />
      <Ribbon />
      <DrawingArea />
      <StatusBar />
    </Window>
  );
}

export default App;
